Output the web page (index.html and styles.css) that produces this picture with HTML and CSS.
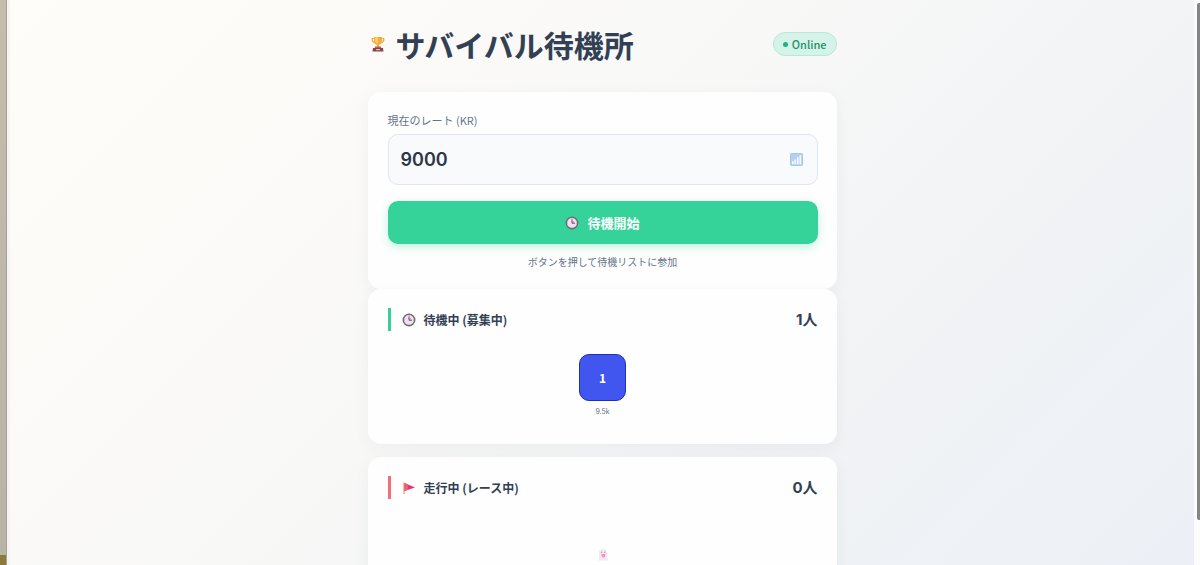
FILE: index.html
```html
<!DOCTYPE html>
<html lang="ja">
<head>
<meta charset="utf-8">
<meta name="viewport" content="width=device-width, initial-scale=1">
<title>サバイバル待機所</title>
<link rel="stylesheet" href="styles.css">
</head>
<body>
<svg width="0" height="0" class="defs" aria-hidden="true">
  <symbol id="clock" viewBox="0 0 14 14">
    <circle cx="7" cy="7" r="5.7" fill="#eee2ef" stroke="#716a78" stroke-width="1.5"/>
    <path d="M7 3.4V7.2H10" fill="none" stroke="#684b63" stroke-width="1"/>
    <path d="M7 7.1L9 5.2" stroke="#d84a78" stroke-width=".7"/>
    <path d="M7 2v.8M7 11.2v.8M2 7h.8M11.2 7h.8" stroke="#a292a8" stroke-width=".7"/>
  </symbol>
</svg>
<div class="desktop-edge"></div>
<main class="page">
  <div class="container">
    <header class="header">
      <svg class="trophy" viewBox="0 0 14 16" aria-hidden="true">
        <path d="M3.5 2.5H1.2Q.9 6.5 4.7 7M10.5 2.5h2.3Q13.1 6.5 9.3 7" fill="none" stroke="#f2a63e" stroke-width="1.2"/>
        <path d="M3 1h8v3.500Q11 8 8 9v2H6V9Q3 8 3 4.500z" fill="#f6ac3d"/>
        <path d="M4 1.500h3v6Q4 6.500 4 4z" fill="#ffd36b"/>
        <path d="M4.200 10.500h5.600l.7 2h-7z" fill="#b65f50"/>
        <path d="M2 12h10l.5 3.500h-11z" fill="#874552"/>
        <path d="M5 13h4v1.200H5z" fill="#e8b9a0"/>
      </svg>
      <h1 class="title">サバイバル待機所</h1>
      <span class="status"><i class="dot"></i>Online</span>
    </header>
    <section class="card entry">
      <label class="label" for="rate">現在のレート (KR)</label>
      <div class="field">
        <input class="input" id="rate" type="text" inputmode="numeric" value="9000">
        <svg class="chart" viewBox="0 0 14 14" aria-hidden="true">
          <rect x=".5" y=".5" width="13" height="13" rx="1" fill="#b4d1f3" stroke="#a1c2e8"/>
          <path d="M3 12V9M5.700 12V7M8.400 12V4.500M11.100 12V2.500" stroke="#f8fbff" stroke-width="1.700"/>
        </svg>
      </div>
      <button class="start" type="button"><svg class="clock" aria-hidden="true"><use href="#clock"/></svg>待機開始</button>
      <p class="hint">ボタンを押して待機リストに参加</p>
    </section>
    <section class="card waiting">
      <div class="card-head green">
        <h2 class="subtitle"><svg class="clock" aria-hidden="true"><use href="#clock"/></svg>待機中 (募集中)</h2>
        <span class="count">1人</span>
      </div>
      <div class="player">
        <div class="avatar">1</div>
        <span class="rate">9.5k</span>
      </div>
    </section>
    <section class="card running">
      <div class="card-head red">
        <h2 class="subtitle">
          <svg class="clock" viewBox="0 0 14 14" aria-hidden="true"><path d="M2 1.500V13" stroke="#e9a86d" stroke-width="1.400"/><path d="M2.500 2L13 6.500L2.500 10z" fill="#e63472"/><path d="M2.500 2L6 3.500V8.800L2.500 10z" fill="#f05c72"/></svg>走行中 (レース中)</h2>
        <span class="count">0人</span>
      </div>
      <div class="empty">
        <svg class="ghost" viewBox="0 0 12 14" aria-hidden="true"><path d="M2 12V5Q2 1 6 1t4 4v4l1.500 3-2 1-1.500-1-2 1-2-1-2 1L.5 11z" fill="#f5dcef"/><circle cx="4.600" cy="4.200" r=".8" fill="#8b7185"/><circle cx="7.800" cy="4.200" r=".8" fill="#8b7185"/><path d="M4.300 6h4Q8.500 9.500 6.700 9.500T4.300 6z" fill="#e76b9c"/></svg>
      </div>
    </section>
  </div>
</main>
<div class="scroll-track"><div class="scroll-thumb"></div></div>
</body>
</html>
```
FILE: styles.css
```css
* { box-sizing: border-box; }
body {
  margin: 0;
  height: 100vh;
  display: flex;
  overflow: hidden;
  color: #324054;
  font-family: "Noto Sans CJK JP", sans-serif;
}
.defs { position: absolute; }
.desktop-edge {
  flex: 0 0 7px;
  background: linear-gradient(#c5bdab, #b8b3a6) top / 100% calc(100% - 10px) no-repeat #8b7a3c;
  border-right: 1px solid #a5a297;
}
.page {
  flex: 1;
  overflow: hidden;
  border-left: 3px solid #f5f4f3;
  background: linear-gradient(135deg, #fffdf9 0%, #f8f8f7 45%, #f1f3f5 70%, #ecf0f6 100%);
}
.container { max-width: 469px; margin: 0 auto; }
.header { display: flex; align-items: center; height: 92px; padding: 0 0 4px 3px; }
.trophy { width: 14px; height: 16px; margin-right: 11px; }
.title { margin: 0; font-size: 30px; line-height: 40px; font-weight: 700; }
.status {
  display: flex;
  align-items: center;
  gap: 4px;
  height: 24px;
  margin-left: auto;
  padding: 0 9px;
  border: 1px solid #b8e8d6;
  border-radius: 12px;
  background: #d5f3e8;
  color: #269169;
  font-size: 11px;
  font-weight: 500;
}
.dot { width: 5px; height: 5px; border-radius: 50%; background: #17b77e; }
.card {
  padding: 19px 19px 19px 20px;
  border-radius: 13px;
  background: #fefefe;
  box-shadow: 0 4px 16px rgba(40, 50, 60, .05);
}
.entry { min-height: 197px; }
.label { display: block; margin-bottom: 5px; color: #64748b; font-size: 11px; line-height: 18px; }
.field {
  display: flex;
  align-items: center;
  height: 51px;
  padding: 0 14px 0 12px;
  border: 1px solid #dfe6ee;
  border-radius: 10px;
  background: #f8fafc;
}
.input {
  flex: 1;
  min-width: 0;
  padding: 0;
  border: 0;
  outline: 0;
  background: none;
  color: #2d3548;
  font: 600 18px/28px Inter, sans-serif;
}
.chart { width: 13px; height: 13px; }
.start {
  display: flex;
  align-items: center;
  justify-content: center;
  gap: 8px;
  width: 100%;
  height: 43px;
  margin-top: 16px;
  border: 0;
  border-radius: 10px;
  background: #35d399;
  box-shadow: 0 3px 10px rgba(53, 211, 153, .3);
  color: #fff;
  font: 700 13px/20px "Noto Sans CJK JP", sans-serif;
}
.clock { width: 14px; height: 14px; flex: none; }
.hint { margin: 10px 0 0; text-align: center; color: #64748b; font-size: 10px; line-height: 16px; }
.waiting { min-height: 155px; }
.running { min-height: 155px; margin-top: 13px; }
.card-head {
  display: flex;
  align-items: center;
  justify-content: space-between;
  height: 23px;
  padding-left: 11px;
  border-left: 3px solid;
}
.green { border-color: #35cf97; }
.red { border-color: #f47078; }
.subtitle,
.count { color: #324054; }
.subtitle { display: flex; align-items: center; gap: 8px; margin: 0; font-size: 12px; line-height: 20px; font-weight: 700; }
.count { font: 700 15px/22px Inter, "Noto Sans CJK JP", sans-serif; }
.player { display: flex; flex-direction: column; align-items: center; padding-top: 23px; }
.avatar {
  display: grid;
  place-items: center;
  width: 47px;
  height: 47px;
  border: 1px solid #1e2fb8;
  border-radius: 10px;
  background: #4056ee;
  color: #fff;
  font-size: 12px;
  font-weight: 700;
}
.rate { margin-top: 5px; color: #64748b; font: 400 7px/11px Inter, sans-serif; }
.empty { display: flex; justify-content: center; padding-top: 49px; }
.ghost { width: 12px; height: 14px; opacity: .7; }
.scroll-track { flex: 0 0 6px; padding: 3px 0 0 3px; background: #fcfcfc; }
.scroll-thumb { height: 92%; background: #858585; border-radius: 2px 0 0 2px; }
```
